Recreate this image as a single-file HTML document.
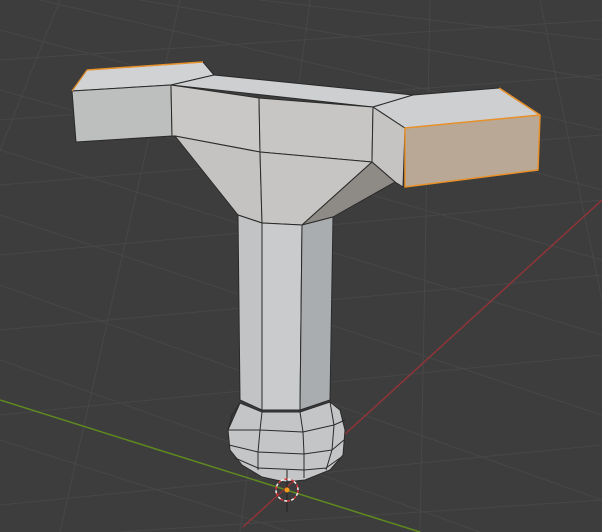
<!DOCTYPE html>
<html><head><style>html,body{margin:0;padding:0;background:#3d3d3d;overflow:hidden}svg{display:block}</style></head>
<body>
<svg width="602" height="532" viewBox="0 0 602 532" xmlns="http://www.w3.org/2000/svg">
<rect width="602" height="532" fill="#3d3d3d"/>
<g stroke="#474747" stroke-width="1" fill="none">
<path d="M0,60 L602,20 M0,120 L602,75 M0,185 L602,135 M0,255 L602,200 M0,330 L602,275 M0,415 L602,355 M0,505 L602,445 M120,532 L602,500"/>
<path d="M0,30 L602,190 M0,90 L602,260 M0,150 L602,335 M0,215 L602,415 M0,285 L602,500 M0,360 L480,532 M0,440 L290,532 M40,0 L602,130 M140,0 L602,80 M260,0 L602,40"/>
<path d="M60,0 L0,150 M180,0 L60,532 M310,0 L240,532 M430,0 L420,532 M540,0 L602,300"/>
</g>
<line x1="0" y1="400" x2="420" y2="532" stroke="#5f8a1f" stroke-width="1.5"/>
<line x1="243" y1="527" x2="602" y2="200" stroke="#8f3438" stroke-width="1.5"/>
<g stroke="#2a2a2a" stroke-width="1" stroke-linejoin="round">
<!-- left arm -->
<polygon points="87,70 203,62 214,75 171,85 72,91" fill="#d0d2d4"/>
<polygon points="72,91 171,85 172,136 76,142" fill="#bdbebe"/>
<!-- center top -->
<polygon points="171,85 214,75 413,95 373,107" fill="#cdcfd1"/>
<polygon points="171,85 259,98 260,152 175,136 172,136" fill="#c9c8c6"/>
<polygon points="259,98 373,107 372,162 260,152" fill="#c7c6c4"/>
<!-- right side wall -->
<polygon points="373,107 405,128 403,187 395,182 372,162" fill="#c5c4c2"/>
<!-- right arm -->
<polygon points="373,107 413,95 499,88 540,115 405,128" fill="#cdcfd1"/>
<polygon points="405,128 540,115 538,170 405,187" fill="#b9a896" stroke="#e8902a" stroke-width="1.5"/>
<!-- funnel -->
<polygon points="175,136 260,152 262,223 238,215" fill="#c4c3c1"/>
<polygon points="260,152 372,162 302,225 262,223" fill="#c6c5c3"/>
<polygon points="372,162 395,182 333,217 302,225" fill="#8e8b86"/>
<!-- shaft -->
<polygon points="238,215 262,223 262,410 240,400" fill="#c2c3c4"/>
<polygon points="262,223 302,225 300,410 262,410" fill="#cacbcc"/>
<polygon points="302,225 333,217 330,400 300,410" fill="#a9adaf"/>
<!-- bulb -->
<path d="M240,403 L262,412 L300,412 L330,402 L340,410 L345,430 L343,455 L330,470 L305,480 L285,482 L262,477 L242,465 L230,450 L228,430 Z" fill="#c4c5c6"/>
<path d="M240,403 L232,415 L228,430 M262,412 L260,430 L258,452 L258,470 M300,412 L303,432 L304,454 L304,478 M330,402 L334,425 L332,450 L326,470 M228,430 L260,430 L303,432 L334,425 L345,420 M229,445 L258,452 L304,454 L332,450 L344,440 M235,458 L258,468 L304,470 L326,468 L340,458" fill="none"/>
</g>
<line x1="72" y1="91" x2="87" y2="70" stroke="#e8902a" stroke-width="1.2"/>
<line x1="87" y1="70" x2="203" y2="62" stroke="#e8902a" stroke-width="1.5"/>
<line x1="499" y1="88" x2="540" y2="115" stroke="#e8902a" stroke-width="1.5"/>
<line x1="287" y1="470" x2="287" y2="512" stroke="#222" stroke-width="1"/>
<circle cx="287" cy="490" r="11" fill="none" stroke="#d33" stroke-width="1.5" stroke-dasharray="4 3"/>
<circle cx="287" cy="490" r="11" fill="none" stroke="#eee" stroke-width="1.5" stroke-dasharray="3 4" stroke-dashoffset="4"/>
<circle cx="287" cy="490" r="2.5" fill="#f39a1c"/>
</svg>
</body></html>
